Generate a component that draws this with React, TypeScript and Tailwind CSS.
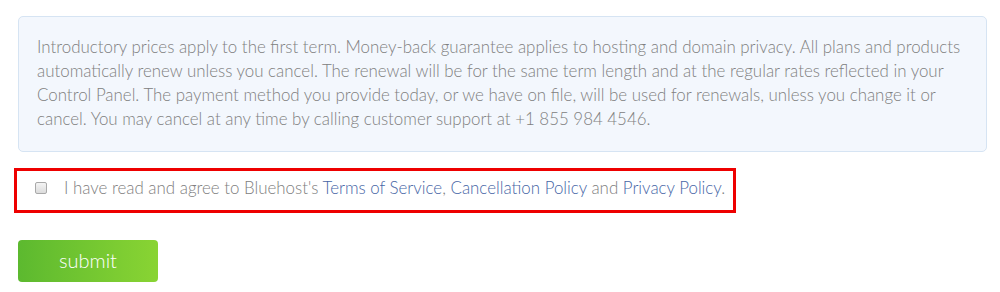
import React from "react";

export default function App() {
  const lines = [
    "Introductory prices apply to the first term. Money-back guarantee applies to hosting and domain privacy. All plans and products",
    "automatically renew unless you cancel. The renewal will be for the same term length and at the regular rates reflected in your",
    "Control Panel. The payment method you provide today, or we have on file, will be used for renewals, unless you change it or",
    "cancel. You may cancel at any time by calling customer support at +1 855 984 4546.",
  ];
  return (
    <div
      className="w-[1000px] h-[292px] bg-white overflow-hidden pt-[16px]"
      style={{ fontFamily: "Lato, 'Open Sans', sans-serif" }}
    >
      <div className="ml-[18px] w-[969px] h-[136px] rounded-[5px] border border-[#d6e4f3] bg-[#f3f7fd] pl-[18px] pt-[18px] text-[16.9px] leading-[24px] font-light text-[#808080]">
        {lines.map((l, i) => (
          <div key={i} className="whitespace-nowrap">
            {l}
          </div>
        ))}
      </div>
      <div className="mt-[16px] ml-[14px] w-[722px] h-[45px] border-[3px] border-[#ee0000] flex items-center pl-[18px] pb-[5px]">
        <span className="w-[12px] h-[12px] rounded-[2px] border border-[#a9a9a9] bg-gradient-to-b from-[#f4f4f4] to-[#dcdcdc] mr-[17px]" />
        <span className="text-[16.9px] font-light text-[#808080] whitespace-nowrap">
          I have read and agree to Bluehost's{" "}
          <span className="text-[#4766a6]">Terms of Service</span>,{" "}
          <span className="text-[#4766a6]">Cancellation Policy</span> and{" "}
          <span className="text-[#4766a6]">Privacy Policy</span>.
        </span>
      </div>
      <button className="mt-[27px] ml-[18px] w-[140px] h-[42px] rounded-[4px] bg-gradient-to-r from-[#5cb92f] to-[#89d433] text-white text-[20px] font-light flex items-center justify-center pb-[3px]">
        submit
      </button>
    </div>
  );
}
